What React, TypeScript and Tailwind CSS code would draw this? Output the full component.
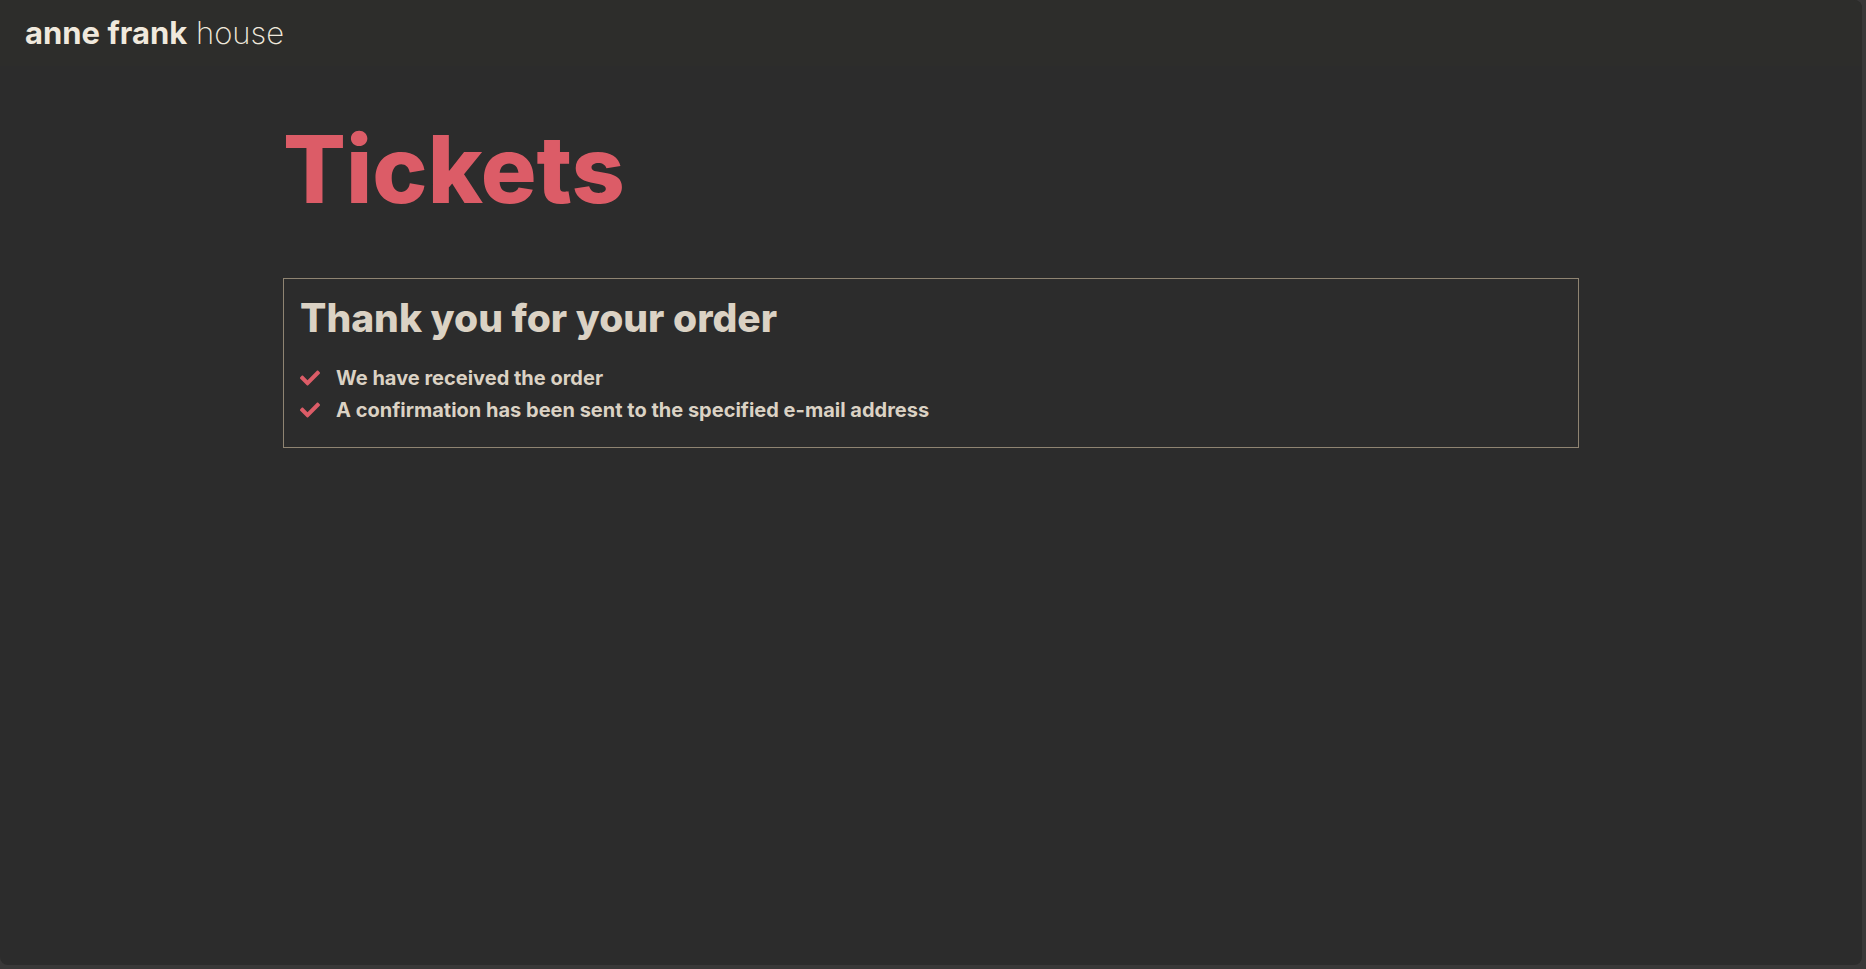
import { FaCheck } from "react-icons/fa";

const messages = [
  "We have received the order",
  "A confirmation has been sent to the specified e-mail address",
];

function Header() {
  return (
    <header className="flex h-[66px] items-center bg-[#2d2d2b] px-[25px]">
      <a href="/" className="text-[31px] leading-9 text-[#f0e9dd]">
        <span className="font-bold">anne frank</span> <span className="font-extralight">house</span>
      </a>
    </header>
  );
}

function Confirmation() {
  return (
    <section className="border border-[#8f8472] px-4 pt-[15px] pb-5 text-[#dbd2c4]">
      <h2 className="text-[39px] leading-12 font-extrabold">Thank you for your order</h2>
      <ul className="mt-5 pb-px">
        {messages.map((message) => (
          <li key={message} className="flex items-center gap-4 text-xl leading-8 font-bold">
            <FaCheck className="size-5 shrink-0 text-[#dc5c67]" aria-hidden="true" />
            {message}
          </li>
        ))}
      </ul>
    </section>
  );
}

export default function App() {
  return (
    <div className="flex min-h-screen flex-col bg-[#393838] pr-1 pb-1 font-['Inter',sans-serif]">
      <div className="flex-1 overflow-hidden rounded-lg rounded-tl-none bg-[#2c2c2c]">
        <Header />
        <main className="mx-auto max-w-[1296px] pt-12">
          <h1 className="mb-[54px] text-[93px] leading-[110px] font-extrabold text-[#dc5c67]">Tickets</h1>
          <Confirmation />
        </main>
      </div>
    </div>
  );
}
